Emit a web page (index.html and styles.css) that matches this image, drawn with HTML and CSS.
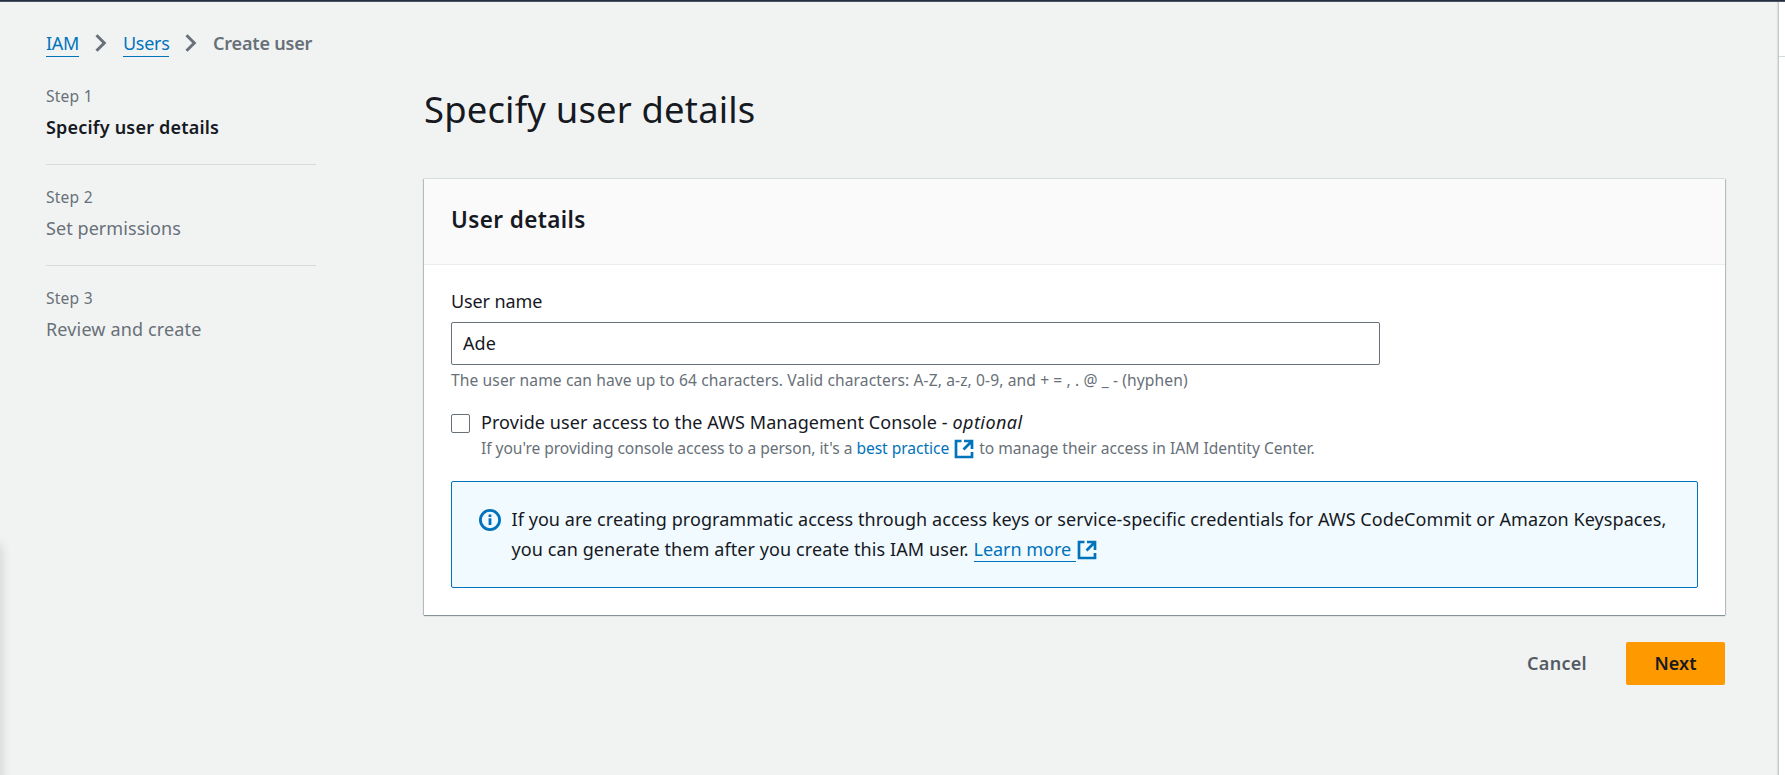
FILE: index.html
```html
<!DOCTYPE html>
<html lang="en">
<head>
<meta charset="utf-8">
<title>Create user | IAM</title>
<link rel="stylesheet" href="styles.css">
</head>
<body>
<div class="topbar"></div>
<div class="app">
  <div class="drawer-shadow"></div>
  <div class="content">
    <nav class="breadcrumbs">
      <a class="crumb crumb-iam" href="#">IAM</a>
      <svg class="chevron" viewBox="0 0 12 18"><path d="M1.5 1.2 9.3 9l-7.8 7.8"/></svg>
      <a class="crumb crumb-users" href="#">Users</a>
      <svg class="chevron" viewBox="0 0 12 18"><path d="M1.5 1.2 9.3 9l-7.8 7.8"/></svg>
      <span class="crumb-current">Create user</span>
    </nav>
    <div class="wizard">
      <ol class="steps">
        <li class="step"><span class="step-no">Step 1</span><span class="step-name active">Specify user details</span></li>
        <li class="step"><span class="step-no">Step 2</span><span class="step-name">Set permissions</span></li>
        <li class="step"><span class="step-no">Step 3</span><span class="step-name review">Review and create</span></li>
      </ol>
      <main class="main">
        <h1 class="title">Specify user details</h1>
        <section class="card">
          <header class="card-head"><h2 class="card-title">User details</h2></header>
          <div class="card-body">
            <label class="label" for="username">User name</label>
            <input class="input" id="username" type="text" value="Ade">
            <p class="constraint">The user name can have up to 64 characters. Valid characters: A-Z, a-z, 0-9, and + = , . @ _ - (hyphen)</p>
            <div class="check">
              <span class="box"></span>
              <div>
                <p class="check-label">Provide user access to the AWS Management Console - <em class="optional">optional</em></p>
                <p class="check-desc">If you're providing console access to a person, it's a <a class="link" href="#">best practice</a><svg class="ext ext-small" viewBox="0 0 20 20"><path d="M7.5 2H2v16h16v-5M10 2h8v8M17.5 2.5l-8 8"/></svg><span class="desc-end">to manage their access in IAM Identity Center.</span></p>
              </div>
            </div>
            <div class="alert">
              <svg class="info" viewBox="0 0 22 22"><circle cx="11" cy="11" r="9.6"/><path d="M11 9.3V16M11 5.4V8"/></svg>
              <p class="alert-text">If you are creating programmatic access through access keys or service-specific credentials for AWS CodeCommit or Amazon Keyspaces,<br><span class="second">you can generate them after you create this IAM user.</span> <a class="link learn" href="#">Learn more</a><svg class="ext" viewBox="0 0 20 20"><path d="M7.5 2H2v16h16v-5M10 2h8v8M17.5 2.5l-8 8"/></svg></p>
            </div>
          </div>
        </section>
        <div class="actions">
          <button class="btn cancel">Cancel</button>
          <button class="btn next">Next</button>
        </div>
      </main>
    </div>
  </div>
  <aside class="tools"><div class="tools-head"></div></aside>
</div>
</body>
</html>
```
FILE: styles.css
```css
* { box-sizing: border-box; }
body {
  margin: 0;
  height: 775px;
  overflow: hidden;
  background: #f1f3f3;
  color: #16191f;
  font-family: "Noto Sans", "Open Sans", sans-serif;
  font-size: 18px;
  line-height: 30px;
  letter-spacing: 0.07px;
}
h1, h2, p, ol { margin: 0; padding: 0; font-weight: 400; }
a { color: #0073bb; text-decoration: none; }
.topbar { height: 2px; background: linear-gradient(#232f3e 50%, #4a5361 50%); }
.app { position: relative; display: flex; height: 773px; }
.content { flex: 1; padding: 26px 53px 0 46px; }
.drawer-shadow {
  position: absolute;
  left: -10px;
  top: 543px;
  width: 10px;
  height: 260px;
  box-shadow: 0 0 12px rgba(0, 0, 0, 0.18);
}
.tools { width: 7px; background: #fff; border-left: 1px solid #c3c8ca; box-shadow: -1px 0 1px rgba(0, 28, 36, 0.08); }
.tools-head { height: 55px; border-bottom: 1px solid #d5dbdb; }

.breadcrumbs { display: flex; align-items: center; height: 30px; }
.crumb { height: 28px; line-height: 28px; margin-top: -1px; border-bottom: 1px solid #0073bb; letter-spacing: -0.3px; white-space: nowrap; }
.crumb-iam { width: 33px; }
.crumb-users { width: 46px; }
.chevron { width: 12px; height: 18px; margin: 0 16px; }
.chevron path { fill: none; stroke: #687078; stroke-width: 3; }
.crumb-current { color: #687078; font-weight: 650; letter-spacing: -0.18px; }

.wizard { display: flex; }
.steps { list-style: none; width: 270px; margin-right: 108px; padding-top: 26px; }
.step { display: flex; flex-direction: column; gap: 4px; height: 81px; margin-bottom: 20px; border-bottom: 1px solid #d5dbdb; color: #687078; }
.step:last-child { border-bottom: 0; }
.step-no { font-size: 15.6px; line-height: 24px; letter-spacing: 0.2px; }
.step-name.active { color: #16191f; font-weight: 650; letter-spacing: 0.2px; }
.step-name.review { letter-spacing: 0.15px; }

.main { flex: 1; padding-top: 29px; }
.title { font-size: 36.4px; line-height: 45px; letter-spacing: 0.18px; }
.card {
  margin-top: 47px;
  height: 436px;
  background: #fff;
  box-shadow: 0 1px 1px rgba(0, 28, 36, 0.4), 1px 0 1px rgba(0, 28, 36, 0.2), -1px 0 1px rgba(0, 28, 36, 0.2), 0 -1px 0 #e8ebeb;
}
.card-head { height: 86px; padding: 26px 27px 0; background: #fafafa; border-bottom: 1px solid #eaeded; }
.card-title { font-size: 22.5px; font-weight: 650; line-height: 30px; letter-spacing: 0.4px; }
.card-body { padding: 21px 27px 0; }
.label { display: block; margin-bottom: 6px; letter-spacing: -0.12px; }
.input {
  display: block;
  width: 929px;
  height: 43px;
  padding: 0 11px 2px;
  border: 1px solid #687078;
  border-radius: 2px;
  background: #fff;
  color: #16191f;
  font: inherit;
  letter-spacing: 0.07px;
  outline: 0;
}
.constraint { margin-top: 4px; color: #687078; font-size: 15.6px; line-height: 22px; letter-spacing: 0.108px; white-space: nowrap; }
.check { display: flex; margin-top: 16px; }
.box { width: 19px; height: 19px; margin: 7px 11px 0 0; border: 1px solid #687078; border-radius: 2px; }
.check-label { height: 30px; letter-spacing: 0.08px; white-space: nowrap; }
.optional { letter-spacing: 0.45px; }
.check-desc { height: 22px; color: #687078; font-size: 15.6px; line-height: 22px; letter-spacing: -0.05px; white-space: nowrap; }
.desc-end { letter-spacing: -0.01px; }
.ext { width: 20px; height: 20px; margin: 0; vertical-align: -4px; }
.ext-small { margin: 0 5px 0 5px; vertical-align: -5px; }
.ext path { fill: none; stroke: #0073bb; stroke-width: 2.7; }
.alert { display: flex; height: 107px; margin-top: 22px; padding: 22px 0 0 27px; background: #f1faff; border: 1px solid #0073bb; border-radius: 2px; }
.info { width: 22px; height: 22px; margin: 5px 10.5px 0 0; }
.info circle, .info path { fill: none; stroke: #0073bb; stroke-width: 2.8; }
.alert-text { letter-spacing: 0.066px; white-space: nowrap; }
.second { letter-spacing: 0.092px; }
.learn { display: inline-block; width: 102px; height: 28px; margin-right: 1px; border-bottom: 1px solid #0073bb; letter-spacing: -0.03px; vertical-align: top; }
.actions { display: flex; justify-content: flex-end; margin-top: 27px; }
.btn { height: 43px; padding: 0; border: 0; border-radius: 2px; background: none; font: 650 18px/43px "Noto Sans", sans-serif; }
.cancel { margin-right: 39px; color: #545b64; letter-spacing: 0.3px; }
.next { width: 99px; background: #ff9900; color: #16191f; letter-spacing: 0.05px; }
```
